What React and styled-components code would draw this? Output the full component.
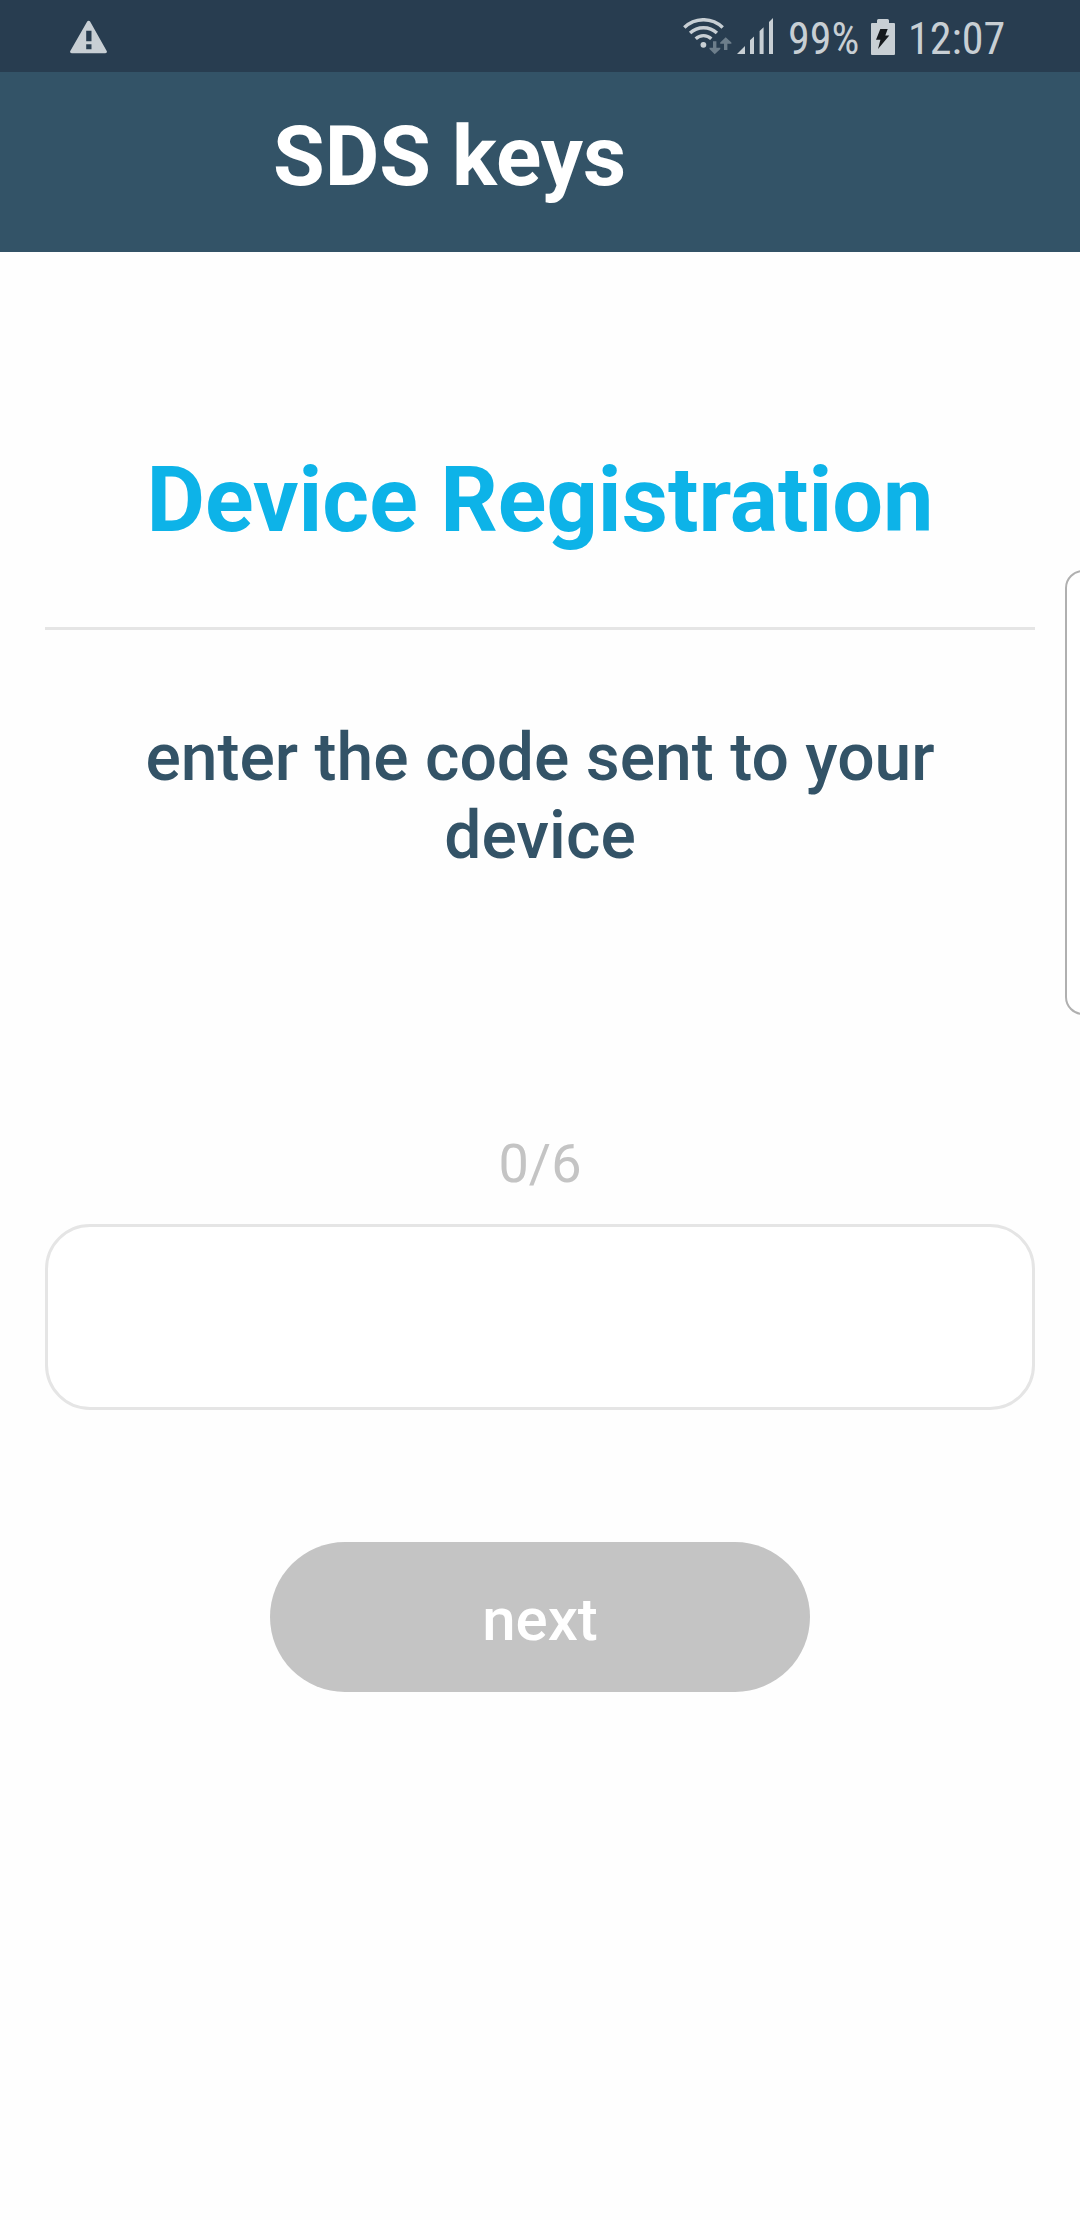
import React, { useState } from 'react';
import styled, { createGlobalStyle } from 'styled-components';

const CODE_LENGTH = 6;

function WarningIcon() {
  return (
    <svg width="37" height="34" viewBox="0 0 37 34">
      <path
        fillRule="evenodd"
        fill="#c8cfd4"
        d="M17.2 1.6a1.7 1.7 0 0 1 2.9 0L36.7 31a1.6 1.6 0 0 1-1.4 2.2H1.7A1.6 1.6 0 0 1 .3 31zM16.2 10.7v10.6h5.3V10.7zM16.2 24.3v5h5.3v-5z"
      />
    </svg>
  );
}

function WifiIcon() {
  return (
    <svg width="50" height="37" viewBox="0 0 50 37">
      <g fill="none" stroke="#c8cfd4" strokeWidth="3.4">
        <path d="M1.3 9.5a27.5 27.5 0 0 1 38.4 0" />
        <path d="M7.1 15.1a19.5 19.5 0 0 1 26.8 0" />
        <path d="M12.7 20.7a11.5 11.5 0 0 1 15.6 0" />
      </g>
      <circle cx="20.4" cy="26.8" r="2.9" fill="#c8cfd4" />
      <path fill="#6d7e8b" d="M30 23.3h3.4v6.5h3.9v1.2l-5.6 5.2-5.2-5.2v-1.2H30zM41 32h3.4v-6.2h4v-1.2l-5.7-5.4-5.5 5.4v1.2H41z" />
    </svg>
  );
}

function SignalIcon() {
  return (
    <svg width="37" height="36" viewBox="0 0 37 36">
      <path fill="#c8cfd4" d="M0 36h8v-8zM13 36V22.2l4-3.6V36zM22.6 36V13l4-3.8V36zM32 36V4l4-4v36z" />
    </svg>
  );
}

function BatteryIcon() {
  return (
    <svg width="24" height="36" viewBox="0 0 24 36">
      <path fill="#c8cfd4" d="M1 4h5V1.5Q6 0 7.5 0h9Q18 0 18 1.5V4h5q1 0 1 1v30q0 1-1 1H1q-1 0-1-1V5q0-1 1-1z" />
      <path fill="#15191d" d="M9.3 10h7.4l-2.4 6.5h4L7 30l2.4-9.3H5z" />
    </svg>
  );
}

function App() {
  const [code, setCode] = useState('');

  const handleChangeCode = (e) => {
    setCode(e.target.value);
  };

  return (
    <Screen>
      <GlobalStyle />
      <StatusBar>
        <Notifications>
          <WarningIcon />
        </Notifications>
        <StatusIcons>
          <Signals>
            <WifiIcon />
            <SignalIcon />
          </Signals>
          <StatusText $width={83}>99%</StatusText>
          <Battery>
            <BatteryIcon />
          </Battery>
          <StatusText $width={100}>12:07</StatusText>
        </StatusIcons>
      </StatusBar>
      <Header>
        <HeaderTitle>SDS keys</HeaderTitle>
      </Header>
      <Content>
        <PageName>Device Registration</PageName>
        <Message>enter the code sent to your device</Message>
        <Counter>
          {code.length}/{CODE_LENGTH}
        </Counter>
        <CodeInput type="text" value={code} maxLength={CODE_LENGTH} onChange={handleChangeCode} />
        <NextButton disabled={code.length < CODE_LENGTH}>next</NextButton>
      </Content>
      <EdgeHandle />
    </Screen>
  );
}

export default App;

const GlobalStyle = createGlobalStyle`
  body {
    margin: 0;
    background-color: #fefefe;
    font-family: Roboto, sans-serif;
  }
`;

const Screen = styled.div`
  position: relative;
  width: 1080px;
  height: 2220px;
  overflow: hidden;
  background-color: #fefefe;
`;

const StatusBar = styled.div`
  display: flex;
  justify-content: space-between;
  box-sizing: border-box;
  height: 72px;
  padding: 18px 72px 0 70px;
  background-color: #283d50;
`;

const Notifications = styled.div`
  display: flex;
  padding-top: 2px;
`;

const StatusIcons = styled.div`
  display: flex;
  align-items: flex-start;
`;

const Signals = styled.div`
  display: flex;
  gap: 4px;
  margin-right: 14px;
`;

const Battery = styled.div`
  display: flex;
  margin-right: 13px;
  padding-top: 1px;
`;

const StatusText = styled.span`
  width: ${(props) => props.$width}px;
  color: #c8cfd4;
  font-family: 'Roboto Condensed', Roboto, sans-serif;
  font-size: 44px;
  font-stretch: 75%;
  line-height: 42px;
  white-space: nowrap;
`;

const Header = styled.header`
  display: flex;
  box-sizing: border-box;
  height: 180px;
  padding: 36px 0 0 273px;
  background-color: #335367;
`;

const HeaderTitle = styled.h1`
  margin: 0;
  color: #ffffff;
  font-weight: 700;
  font-size: 84px;
  line-height: 98px;
`;

const Content = styled.main`
  display: flex;
  flex-direction: column;
  align-items: center;
  padding: 0 45px;
  text-align: center;
`;

const PageName = styled.h2`
  box-sizing: border-box;
  width: 100%;
  height: 378px;
  margin: 0;
  padding-top: 196px;
  border-bottom: 3px solid #e5e5e5;
  color: #0db3e8;
  font-weight: 700;
  font-size: 90px;
  line-height: 106px;
`;

const Message = styled.p`
  width: 810px;
  margin: 89px 0 0;
  color: #335367;
  font-weight: 500;
  font-size: 66px;
  line-height: 78px;
`;

const Counter = styled.div`
  margin-top: 257px;
  color: #c4c4c4;
  font-size: 54px;
  line-height: 64px;
`;

const CodeInput = styled.input`
  box-sizing: border-box;
  width: 100%;
  height: 186px;
  margin: 28px 0 0;
  border: 3px solid #e5e5e5;
  border-radius: 45px;
  outline: none;
  background-color: #ffffff;
  color: #335367;
  font-family: inherit;
  font-size: 66px;
  text-align: center;
`;

const NextButton = styled.button`
  width: 540px;
  height: 150px;
  margin-top: 132px;
  padding: 4px 0 0;
  border: none;
  border-radius: 75px;
  background-color: ${(props) => (props.disabled ? '#c4c4c4' : '#0db3e8')};
  color: #ffffff;
  font-family: inherit;
  font-weight: 500;
  font-size: 60px;
`;

const EdgeHandle = styled.div`
  position: absolute;
  top: 570px;
  right: -30px;
  box-sizing: border-box;
  width: 45px;
  height: 445px;
  border: 2px solid #b0b0b0;
  border-radius: 18px;
  background-color: #ffffff;
`;
